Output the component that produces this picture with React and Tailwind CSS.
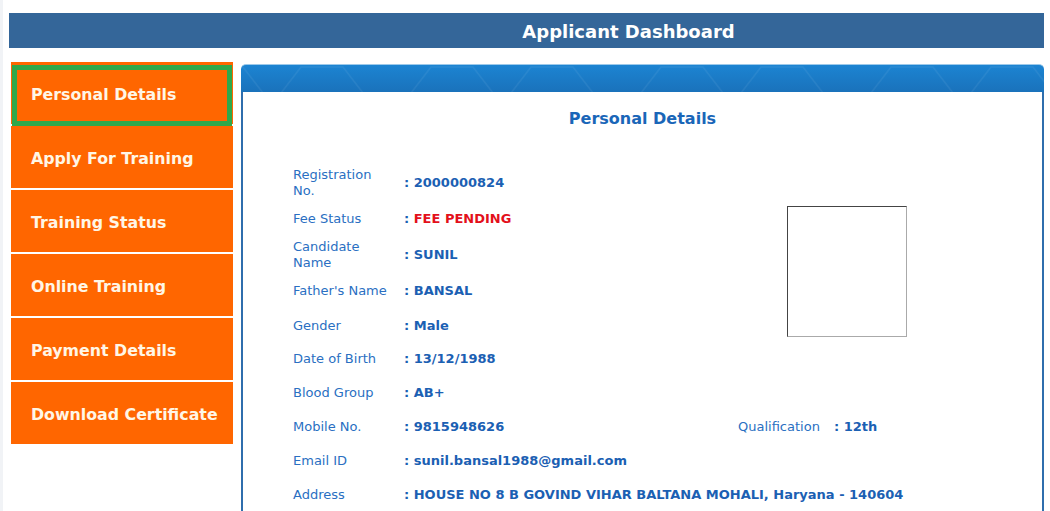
const menu = [
  'Personal Details',
  'Apply For Training',
  'Training Status',
  'Online Training',
  'Payment Details',
  'Download Certificate',
]

function Row({ label, children, className = '' }) {
  return (
    <>
      <div className={`flex items-center pr-[10px] leading-4 text-[13px] text-[#2a6fc2] ${className}`}>{label}</div>
      <div className={`flex items-center font-bold text-[13px] text-[#1b60b3] whitespace-nowrap ${className}`}>{children}</div>
    </>
  )
}

function BarPattern() {
  return (
    <svg className="absolute inset-0 w-full h-full" preserveAspectRatio="none">
      <defs>
        <pattern id="hex" width="230" height="28" patternUnits="userSpaceOnUse" x="40">
          <path d="M0 28 L20 2 L62 2 L82 28 M130 28 L150 2 L192 2 L212 28" fill="none" stroke="#ffffff" strokeOpacity="0.06" strokeWidth="1.5" />
        </pattern>
      </defs>
      <rect width="100%" height="100%" fill="url(#hex)" />
    </svg>
  )
}

export default function App() {
  return (
    <div className="h-screen overflow-hidden bg-[#f1f3f6] pl-[3px] font-['DejaVu_Sans',Verdana,sans-serif]">
      <div className="h-full bg-white pl-[6px] pr-[6px] pt-[13px]">
        {/* Header */}
        <div className="h-[35px] w-[1035px] bg-[#346699] flex items-center justify-center pl-[204px] pt-[2px]">
          <h1 className="text-white font-bold text-[18px] leading-none">Applicant Dashboard</h1>
        </div>

        <div className="flex w-[1035px] mt-[14px]">
          {/* Sidebar */}
          <nav className="ml-[2px] w-[222px] flex flex-col gap-[2px] shrink-0">
            {menu.map((m, i) => (
              <div key={m} className="relative h-[62px] bg-[#ff6600] flex items-center pl-[20px] pt-[3px]">
                {i === 0 && (
                  <span className="absolute top-[3px] left-[1px] right-[1px] -bottom-[2px] border-[5px] border-[#2fa84b]" />
                )}
                <span className="relative text-[15.8px] font-bold text-[#fff6e6]">{m}</span>
              </div>
            ))}
          </nav>

          {/* Panel */}
          <div className="ml-[8px] mt-[2px] flex-1 flex flex-col">
            <div className="relative h-[28px] rounded-t-[5px] bg-gradient-to-b from-[#1c84d2] to-[#1a72bb] border-t border-[#9cc9ea] overflow-hidden">
              <BarPattern />
            </div>
            <div className="flex-1 border-l-2 border-r-2 border-[#2f6ead] bg-white">
              <h2 className="text-center text-[16px] leading-5 font-bold text-[#1a66b8] mt-[17px]">Personal Details</h2>

              <div className="mt-[36px] ml-[50px] grid grid-cols-[111px_334px_96px_1fr] grid-rows-[36px_36px_36px_36px_33px_34px_34px_34px_34px_34px]">
                <Row label="Registration No.">: 2000000824</Row>
                <div className="col-span-2" />
                <Row label="Fee Status"><span>: <span className="text-[#e3101b]">FEE PENDING</span></span></Row>
                <div className="col-span-2 row-span-4 pl-[49px] pt-[5px]">
                  <div className="w-[120px] h-[131px] border border-t-[#444] border-l-[#444] border-b-[#aaa] border-r-[#aaa]" />
                </div>
                <Row label="Candidate Name">: SUNIL</Row>
                <Row label="Father's Name">: BANSAL</Row>
                <Row label="Gender">: Male</Row>
                <Row label="Date of Birth">: 13/12/1988</Row>
                <div className="col-span-2" />
                <Row label="Blood Group">: AB+</Row>
                <div className="col-span-2" />
                <Row label="Mobile No.">: 9815948626</Row>
                <Row label="Qualification">: 12th</Row>
                <Row label="Email ID">: sunil.bansal1988@gmail.com</Row>
                <div className="col-span-2" />
                <div className="flex items-center text-[13px] text-[#2a6fc2]">Address</div>
                <div className="col-span-3 flex items-center font-bold text-[13px] text-[#1b60b3] whitespace-nowrap">
                  : HOUSE NO 8 B GOVIND VIHAR BALTANA MOHALI, Haryana - 140604
                </div>
              </div>
            </div>
          </div>
        </div>
      </div>
    </div>
  )
}
